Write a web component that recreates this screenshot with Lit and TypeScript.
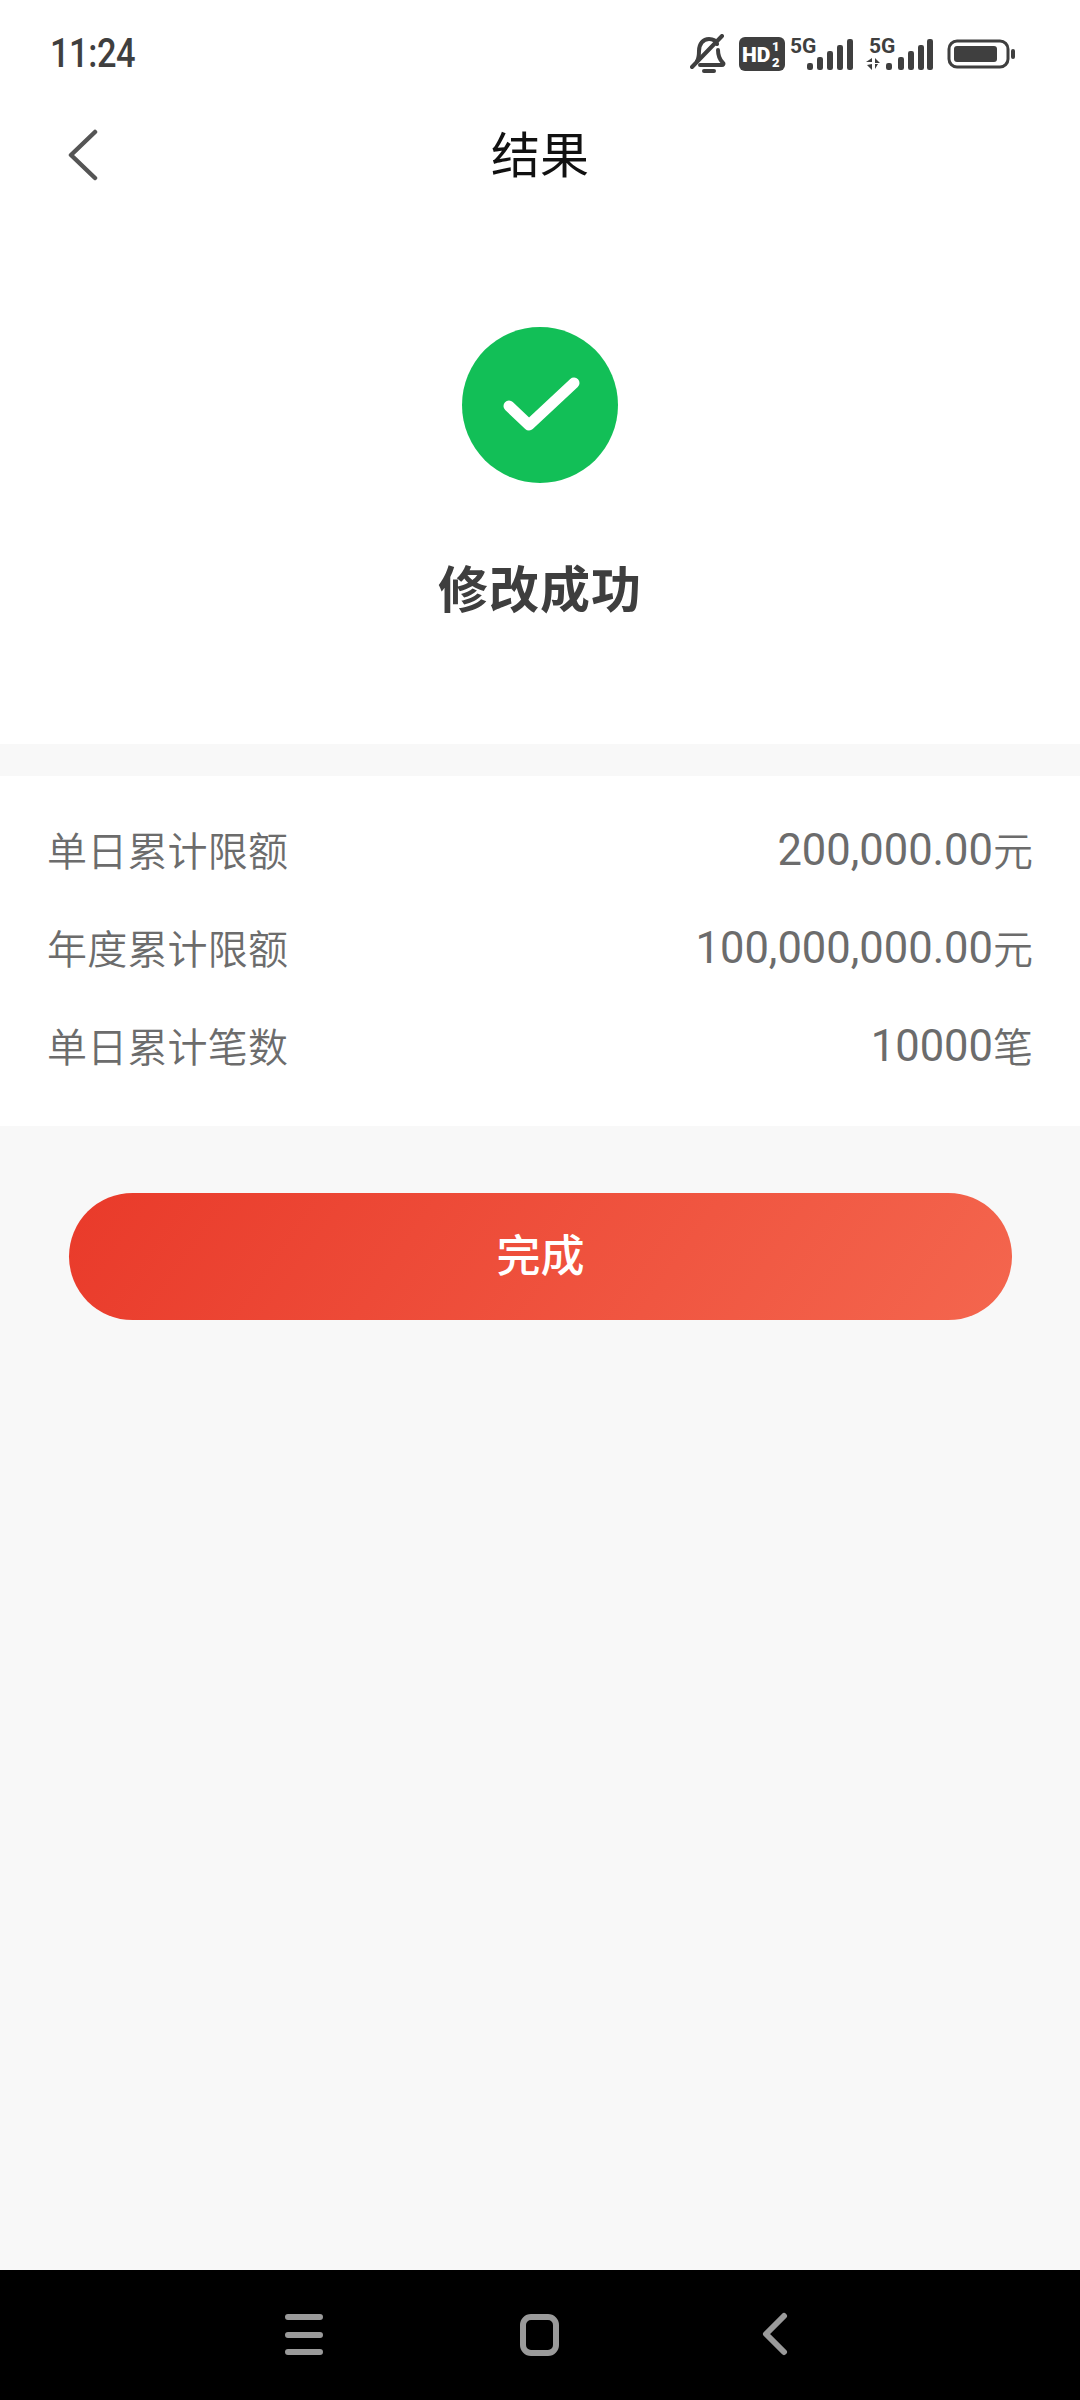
import { LitElement, html, css, svg } from "lit";
import { customElement } from "lit/decorators.js";

const bars = (xs: number[]) =>
  xs.map((x, i) => {
    const h = 7 + i * 6;
    return svg`<rect x=${x} y=${38 - h} width="6" height=${h} rx="2.2" fill="#3f3f3f"></rect>`;
  });

@customElement("app-root")
export class AppRoot extends LitElement {
  static styles = css`
    :host { display: block; width: 1080px; height: 2400px; font-family: "Noto Sans CJK SC", Roboto, sans-serif; }
    .page { width: 1080px; height: 2400px; display: flex; flex-direction: column; background: #f8f8f8; }
    .top { height: 744px; background: #fff; display: flex; flex-direction: column; align-items: center; flex: none; }
    .status { width: 100%; height: 68px; margin-top: 20px; box-sizing: border-box; padding: 0 65px 0 50px; display: flex; align-items: center; justify-content: space-between; flex: none; }
    .time { font: 500 40px/54px Roboto, sans-serif; color: #3f3f3f; letter-spacing: -0.5px; transform: scaleX(.86); transform-origin: left center; display: inline-block; }
    .icons { display: flex; align-items: center; }
    .icons svg { display: block; flex: none; }
    .i-hd { margin-left: 13px; }
    .i-5g { margin-left: 5px; }
    .i-5g2 { margin-left: 12px; }
    .i-bat { margin-left: 14px; }
    .nav { width: 100%; height: 132px; display: flex; align-items: center; justify-content: center; position: relative; flex: none; }
    .back { position: absolute; left: 67px; top: 41px; }
    .title { font-size: 49px; line-height: 70px; color: #111; font-weight: 400; margin-top: -4px; }
    .ok { margin-top: 107px; display: block; }
    .headline { margin-top: 67px; font-size: 50px; line-height: 72px; font-weight: 700; color: #3e3e3e; letter-spacing: 1px; }
    .list { margin-top: 32px; background: #fff; height: 350px; box-sizing: border-box; padding: 24px 47px 0 47px; display: flex; flex-direction: column; flex: none; }
    .row { height: 98px; display: flex; align-items: center; justify-content: space-between; font-size: 40px; color: #6c6c6c; letter-spacing: 0.2px; font-weight: 350; }
    .val { font-family: Roboto, "Noto Sans CJK SC", sans-serif; font-size: 43.5px; font-weight: 400; letter-spacing: 0; color: #6c6c6c; display: flex; align-items: center; padding-top: 2px; }
    .unit { font-family: "Noto Sans CJK SC", sans-serif; font-size: 40px; font-weight: 350; margin-top: -2px; }
    .btn { margin: 67px 68px 0 69px; height: 127px; border-radius: 64px; background: linear-gradient(125deg, #e93a2a 0%, #f4664e 100%); color: #fff; font-size: 44px; font-weight: 500; display: flex; align-items: center; justify-content: center; flex: none; padding-bottom: 8px; box-sizing: border-box; }
    .spacer { flex: 1; }
    .sys { height: 130px; background: #000; flex: none; }
    .sys svg { display: block; }
  `;

  render() {
    return html`<div class="page">
      <div class="top">
        <div class="status">
          <span class="time">11:24</span>
          <div class="icons">
            <svg width="36" height="40" viewBox="0 0 36 40" fill="none" stroke="#3f3f3f" stroke-width="4" stroke-linecap="round" stroke-linejoin="round">
              <path d="M7 27c2-3 2-6 2-10 0-7 4-12 10-12 4 0 7 2 8 5M28 16c0 6 1 9 5 13 1 1 0 2-1 2H10"/>
              <path d="M2 33 32 2"/><path d="M14 37h10"/>
            </svg>
            <svg class="i-hd" width="46" height="34" viewBox="0 0 46 34">
              <rect width="46" height="34" rx="6" fill="#3f3f3f"></rect>
              <text x="3" y="25" font-family="Roboto" font-weight="900" font-size="21" fill="#fff">HD</text>
              <text x="33" y="14" font-family="Roboto" font-weight="900" font-size="13" fill="#fff">1</text>
              <text x="33" y="30" font-family="Roboto" font-weight="900" font-size="13" fill="#fff">2</text>
            </svg>
            <svg class="i-5g" width="64" height="44" viewBox="0 0 64 44">
              <text x="0" y="21" font-family="Roboto" font-weight="700" font-size="21" fill="#3f3f3f">5G</text>
              ${bars([17, 27, 37, 47, 57])}
            </svg>
            <svg class="i-5g2" width="67" height="44" viewBox="0 0 67 44">
              <text x="3" y="21" font-family="Roboto" font-weight="700" font-size="21" fill="#3f3f3f">5G</text>
              <path d="M0 30h6v-4zM6 32v6l-5-5zM9 26l5 5H9zM9 32h3l-3 5z" fill="#3f3f3f"></path>
              ${bars([20, 32, 42, 52, 61])}
            </svg>
            <svg class="i-bat" width="68" height="30" viewBox="0 0 68 30">
              <rect x="2" y="2" width="59" height="26" rx="8" fill="none" stroke="#3f3f3f" stroke-width="3"></rect>
              <rect x="7" y="7" width="43" height="16" rx="3" fill="#3f3f3f"></rect>
              <rect x="64" y="10" width="4" height="10" rx="2" fill="#3f3f3f"></rect>
            </svg>
          </div>
        </div>
        <div class="nav">
          <svg class="back" width="34" height="52" viewBox="0 0 34 52" fill="none" stroke="#555" stroke-width="4.5" stroke-linecap="round" stroke-linejoin="round"><path d="M28 3 4 26l24 23"/></svg>
          <span class="title">结果</span>
        </div>
        <svg class="ok" width="156" height="156" viewBox="0 0 156 156">
          <circle cx="78" cy="78" r="78" fill="#12bf57"></circle>
          <path d="M47 79 67 98 112 56" fill="none" stroke="#fff" stroke-width="11" stroke-linecap="round" stroke-linejoin="round"></path>
        </svg>
        <div class="headline">修改成功</div>
      </div>
      <div class="list">
        <div class="row"><span>单日累计限额</span><span class="val">200,000.00<span class="unit">元</span></span></div>
        <div class="row"><span>年度累计限额</span><span class="val">100,000,000.00<span class="unit">元</span></span></div>
        <div class="row"><span>单日累计笔数</span><span class="val">10000<span class="unit">笔</span></span></div>
      </div>
      <div class="btn">完成</div>
      <div class="spacer"></div>
      <div class="sys">
        <svg width="1080" height="130" viewBox="0 0 1080 130" fill="none" stroke="#9a9a9a" stroke-width="6" stroke-linecap="round" stroke-linejoin="round">
          <path d="M288 47h32M288 65h32M288 82h32"/>
          <rect x="523" y="47" width="33" height="36" rx="8"/>
          <path d="M784 46 766 64l18 18"/>
        </svg>
      </div>
    </div>`;
  }
}
